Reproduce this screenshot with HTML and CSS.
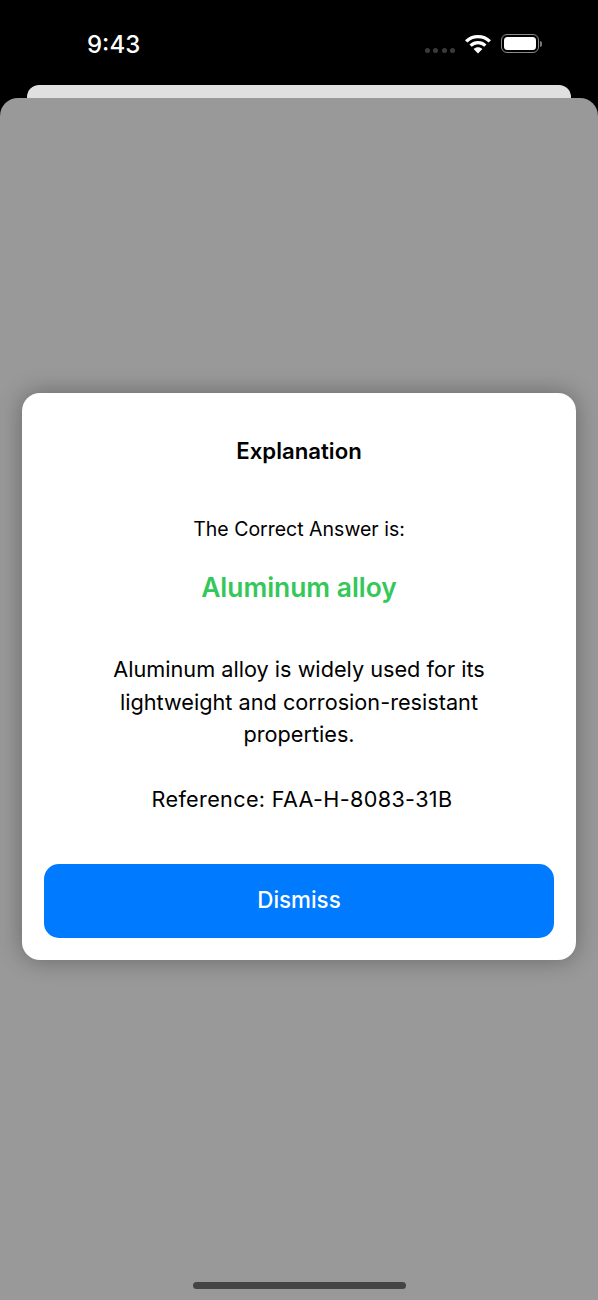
FILE: index.html
```html
<!DOCTYPE html>
<html lang="en">
<head>
<meta charset="utf-8">
<title>Explanation</title>
<link rel="stylesheet" href="styles.css">
</head>
<body>
<div class="screen">
  <header class="status">
    <span class="time">9:43</span>
    <div class="status-icons">
      <div class="signal"><i></i><i></i><i></i><i></i></div>
      <svg class="wifi" width="26" height="20" viewBox="0 0 26 20" aria-hidden="true">
        <path d="M1.2 7.4C7.6 1 18.4 1 24.8 7.4" fill="none" stroke="#fff" stroke-width="3.4"/>
        <path d="M5.6 11.6C9.8 7.6 16.2 7.6 20.4 11.6" fill="none" stroke="#fff" stroke-width="3.2"/>
        <path d="M8.6 15C11.2 12.6 14.8 12.6 17.4 15L13 19.6Z" fill="#fff"/>
      </svg>
      <div class="battery"><div class="battery-body"><div class="battery-fill"></div></div><div class="battery-cap"></div></div>
    </div>
  </header>
  <div class="back-card"></div>
  <main class="sheet">
    <section class="dialog">
      <h1 class="title">Explanation</h1>
      <p class="lead">The Correct Answer is:</p>
      <p class="answer">Aluminum alloy</p>
      <p class="body">Aluminum alloy is widely used for its lightweight and corrosion-resistant properties.</p>
      <p class="ref">Reference: FAA-H-8083-31B</p>
      <button class="dismiss" type="button">Dismiss</button>
    </section>
    <div class="home-bar"></div>
  </main>
</div>
</body>
</html>
```
FILE: styles.css
```css
* { box-sizing: border-box; }
html, body { margin: 0; padding: 0; background: #000; }
body { font-family: Inter, "Liberation Sans", sans-serif; }
.screen { width: 598px; height: 1300px; display: flex; flex-direction: column; overflow: hidden; background: #000; }
.status { height: 85px; flex: none; display: flex; align-items: flex-start; justify-content: space-between; padding: 30px 56px 0 87px; color: #fff; }
.time { font-size: 24px; line-height: 30px; font-weight: 500; }
.status-icons { display: flex; align-items: flex-start; }
.signal { display: flex; gap: 3.3px; margin-top: 18px; }
.signal i { display: block; width: 5px; height: 5px; border-radius: 50%; background: #3a3a3a; }
.wifi { margin: 4px 0 0 10px; }
.battery { display: flex; align-items: center; margin: 4px 0 0 10px; }
.battery-body { width: 38px; height: 19px; border: 1.5px solid #8a8a8a; border-radius: 6px; padding: 2px; }
.battery-fill { width: 100%; height: 100%; background: #fff; border-radius: 3.5px; }
.battery-cap { width: 2px; height: 6px; margin-left: 1px; background: #777; border-radius: 0 2px 2px 0; }
.back-card { height: 13px; flex: none; margin: 0 27px; background: #e0e0e0; border-radius: 12px 12px 0 0; }
.sheet { position: relative; flex: 1; background: #999; border-radius: 18px 18px 0 0; padding: 295px 22px 0; }
.dialog { height: 567px; background: #fff; border-radius: 18px; padding: 44px 22px 22px; display: flex; flex-direction: column; align-items: center; text-align: center; box-shadow: 0 0 24px rgba(0,0,0,.33); }
.title { margin: 0; font-size: 22.2px; line-height: 28px; font-weight: 600; color: #000; }
.lead { margin: 51px 0 0; font-size: 19.5px; line-height: 26px; color: #000; }
.answer { margin: 28px 0 0; font-size: 26.4px; line-height: 34px; font-weight: 600; color: #34c759; }
.body { width: 400px; margin: 49px 0 0; font-size: 21.7px; line-height: 32.5px; color: #000; }
.ref { margin: 32px 0 0; padding-left: 6px; font-size: 21.6px; line-height: 33px; letter-spacing: .35px; color: #000; }
.dismiss { margin-top: auto; width: 100%; height: 74px; flex: none; border: 0; border-radius: 15px; background: #007aff; color: #fff; font: 500 22.4px/72px Inter, "Liberation Sans", sans-serif; padding: 0 0 2px; }
.home-bar { position: absolute; left: 193px; bottom: 11px; width: 213px; height: 7px; border-radius: 4px; background: #444; }
```
